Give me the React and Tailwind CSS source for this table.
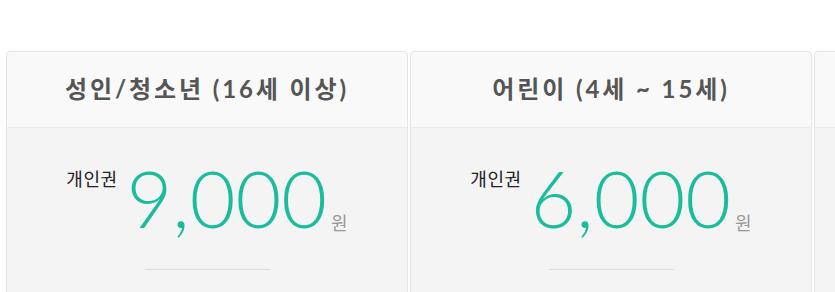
import React from 'react';

const tickets = [
    { title: '성인/청소년 (16세 이상)', price: '9,000' },
    { title: '어린이 (4세 ~ 15세)', price: '6,000' },
    { title: '', price: '' },
];

const TicketCard = ({ title, price }) => {
    return (
        <div className="w-[402px] shrink-0 border border-[#e4e4e4] rounded-t-[4px] bg-[#f4f4f4]">
            <div className="h-[76px] pb-[2px] flex items-center justify-center bg-[#f9f9f9] border-b border-[#ebebeb] rounded-t-[4px]">
                <h3 className="text-[24px] font-bold text-[#555] tracking-[2.9px] font-['Lato','Noto_Sans_CJK_KR',sans-serif]">
                    {title}
                </h3>
            </div>
            <div className="pt-[30px] pb-10 flex flex-col items-center">
                {price && (
                    <>
                        <div className="flex items-start">
                            <span className="mt-[7px] text-[18px] tracking-[0.5px] text-[#222] font-['Noto_Sans_CJK_KR',sans-serif]">개인권</span>
                            <span className="ml-[9px] text-[79px] leading-[80px] font-light text-[#1abc9c] font-['Lato',sans-serif]">
                                {price}
                            </span>
                            <span className="self-end mb-[2px] ml-[4px] text-[18px] text-[#999] font-['Noto_Sans_CJK_KR',sans-serif]">원</span>
                        </div>
                        <div className="mt-[31px] w-[125px] h-px bg-[#dadada]" />
                    </>
                )}
            </div>
        </div>
    );
};

const App = () => {
    return (
        <div className="w-[835px] h-[292px] overflow-hidden bg-white">
            <div className="flex gap-[2px] pt-[51px] pl-[6px]">
                {tickets.map((t, i) => (
                    <TicketCard key={i} title={t.title} price={t.price} />
                ))}
            </div>
        </div>
    );
};

export default App;
